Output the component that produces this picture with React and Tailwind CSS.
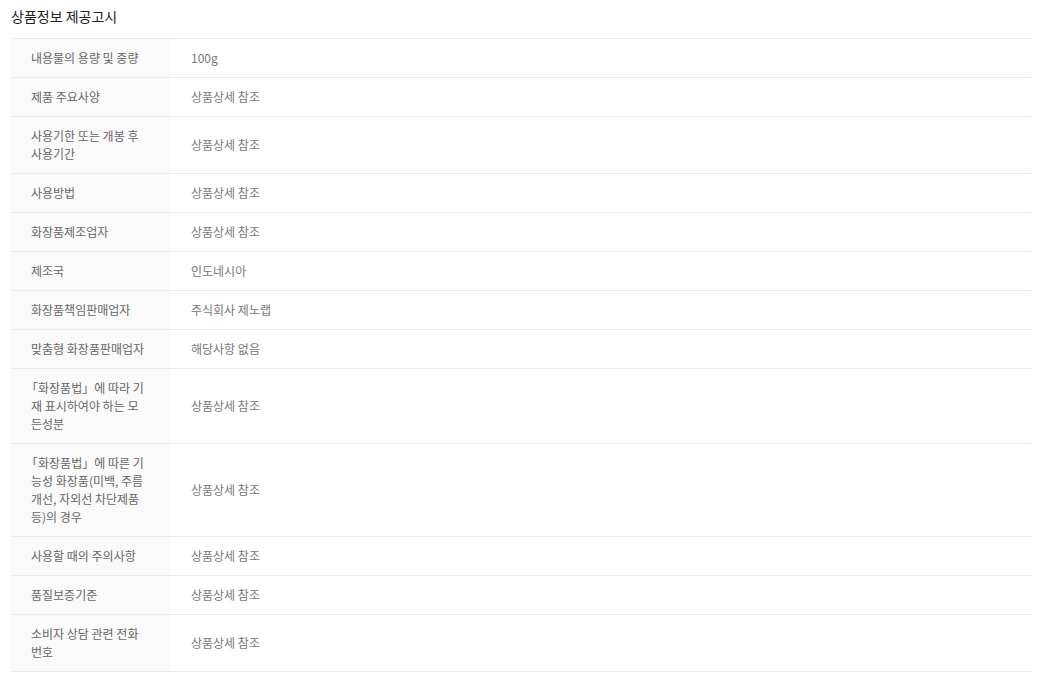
import React from "react";

const rows = [
  { label: ["내용물의 용량 및 중량"], value: "100g" },
  { label: ["제품 주요사양"], value: "상품상세 참조" },
  { label: ["사용기한 또는 개봉 후", "사용기간"], value: "상품상세 참조" },
  { label: ["사용방법"], value: "상품상세 참조" },
  { label: ["화장품제조업자"], value: "상품상세 참조" },
  { label: ["제조국"], value: "인도네시아" },
  { label: ["화장품책임판매업자"], value: "주식회사 제노랩" },
  { label: ["맞춤형 화장품판매업자"], value: "해당사항 없음" },
  {
    label: ["「화장품법」에 따라 기", "재 표시하여야 하는 모", "든성분"],
    value: "상품상세 참조",
  },
  {
    label: [
      "「화장품법」에 따른 기",
      "능성 화장품(미백, 주름",
      "개선, 자외선 차단제품",
      "등)의 경우",
    ],
    value: "상품상세 참조",
  },
  { label: ["사용할 때의 주의사항"], value: "상품상세 참조" },
  { label: ["품질보증기준"], value: "상품상세 참조" },
  { label: ["소비자 상담 관련 전화", "번호"], value: "상품상세 참조" },
];

// pull the full-width opening bracket back to the text edge
const renderLine = (line) => {
  if (line.startsWith("「")) {
    return (
      <>
        <span className="ml-[-5px]">「</span>
        {line.slice(1)}
      </>
    );
  }
  return line;
};

const App = () => {
  return (
    <div
      className="bg-white pl-[11px] pr-[7px] pt-[6px] pb-[6px] text-[12px]"
      style={{ fontFamily: '"Noto Sans CJK KR", "Noto Sans", sans-serif' }}
    >
      <h2 className="text-[14px] font-normal leading-[20px] text-[#222] mb-[12px]">
        상품정보 제공고시
      </h2>
      <div className="border-t border-[#ebebeb]">
        {rows.map((row) => (
          <div key={row.label.join("")} className="flex border-b border-[#ebebeb]">
            <div className="w-[160px] shrink-0 bg-[#fafafa] pl-[20px] pr-[10px] py-[10px] leading-[18px] text-[#666]">
              {row.label.map((line, i) => (
                <div key={i} className="whitespace-nowrap">
                  {renderLine(line)}
                </div>
              ))}
            </div>
            <div className="flex-1 flex items-center pl-[20px] pr-[20px] py-[10px] leading-[18px] text-[#777]">
              {row.value}
            </div>
          </div>
        ))}
      </div>
    </div>
  );
};

export default App;
